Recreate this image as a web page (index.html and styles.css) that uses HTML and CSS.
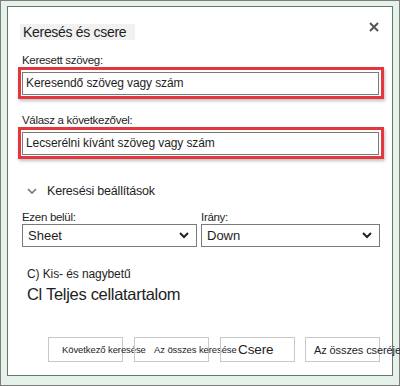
FILE: index.html
```html
<!DOCTYPE html>
<html lang="hu">
<head>
<meta charset="utf-8">
<title>Keresés és csere</title>
<link rel="stylesheet" href="styles.css">
</head>
<body>
<div class="frame">
  <div class="dialog">
    <div class="head">
      <span class="title">Keresés és csere</span>
      <svg class="close" width="10" height="10" viewBox="0 0 10 10"><path d="M1 1 L9 9 M9 1 L1 9" stroke="#555" stroke-width="2" fill="none"/></svg>
    </div>
    <div class="lbl lbl-first">Keresett szöveg:</div>
    <div class="hl"><div class="field">Keresendő szöveg vagy szám</div></div>
    <div class="lbl lbl-second">Válasz a következővel:</div>
    <div class="hl"><div class="field">Lecserélni kívánt szöveg vagy szám</div></div>
    <div class="opts">
      <svg class="chev" width="10" height="7" viewBox="0 0 10 7"><path d="M1 1 L5 5 L9 1" stroke="#777" stroke-width="1.6" fill="none"/></svg>
      <span>Keresési beállítások</span>
    </div>
    <div class="selrow">
      <div class="selcol selcol-a">
        <div class="sl">Ezen belül:</div>
        <div class="sel"><span>Sheet</span><svg width="10" height="7" viewBox="0 0 10 7"><path d="M1 1 L5 5 L9 1" stroke="#222" stroke-width="2" fill="none"/></svg></div>
      </div>
      <div class="selcol selcol-b">
        <div class="sl">Irány:</div>
        <div class="sel"><span>Down</span><svg width="10" height="7" viewBox="0 0 10 7"><path d="M1 1 L5 5 L9 1" stroke="#222" stroke-width="2" fill="none"/></svg></div>
      </div>
    </div>
    <div class="case">C) Kis- és nagybetű</div>
    <div class="whole">Cl Teljes cellatartalom</div>
    <div class="btns">
      <div class="btn b1">Következő keresése</div>
      <div class="btn b2">Az összes keresése</div>
      <div class="btn b3">Csere</div>
      <div class="btn b4">Az összes cseréje</div>
    </div>
  </div>
</div>
</body>
</html>
```

FILE: styles.css
```css
* { box-sizing: border-box; }
html, body { margin: 0; padding: 0; background: #fff; }
body { font-family: "Liberation Sans", Arial, sans-serif; color: #1e1e1e; }

.frame {
  width: 400px;
  height: 386px;
  border: 1px solid #7d7d7d;
  background: #e5f1e9;
  padding: 5px 6px 9px 6px;
}
.dialog {
  height: 100%;
  border: 1px solid #5f7a69;
  background: #fff;
  display: flex;
  flex-direction: column;
}
.head {
  display: flex;
  justify-content: space-between;
  align-items: flex-start;
  margin-top: 17px;
  padding-left: 12px;
  padding-right: 13px;
}
.title {
  background: #f1f1f1;
  font-size: 14px;
  line-height: 16px;
  height: 16px;
  letter-spacing: -0.3px;
  padding: 0 9px 0 3px;
}
.close { margin-top: -2px; }

.lbl {
  font-size: 11.5px;
  line-height: 13px;
  padding-left: 14px;
  letter-spacing: -0.3px;
}
.lbl-first { margin-top: 14px; }
.lbl-second { margin-top: 15px; }

.hl {
  margin: 0 8px 0 10px;
  border: 3px solid #e2383d;
  padding: 2px 2px 1px 1px;
  box-shadow: 1px 2px 3px rgba(0,0,0,0.25);
}
.field {
  border: 1px solid #7a7a7a;
  height: 23px;
  font-size: 12px;
  line-height: 21px;
  padding-left: 3px;
  letter-spacing: -0.1px;
  white-space: nowrap;
}

.opts {
  display: flex;
  align-items: center;
  margin-top: 23px;
  padding-left: 19px;
  height: 18px;
  font-size: 12.5px;
  letter-spacing: -0.2px;
}
.chev { margin-right: 10px; }

.selrow {
  display: flex;
  margin-top: 10px;
  padding-left: 14px;
  gap: 4px;
}
.selcol-a { width: 175px; }
.selcol-b { width: 179px; }
.sl {
  font-size: 11.5px;
  line-height: 14px;
  letter-spacing: -0.3px;
}
.sel {
  display: flex;
  align-items: center;
  justify-content: space-between;
  height: 23px;
  border: 1px solid #7a7a7a;
  padding: 0 7px 0 5px;
  font-size: 13px;
}

.case {
  margin-top: 20px;
  padding-left: 19px;
  font-size: 12px;
  line-height: 14px;
  letter-spacing: -0.1px;
}
.whole {
  margin-top: 3px;
  padding-left: 19px;
  font-size: 16.5px;
  line-height: 20px;
  letter-spacing: -0.3px;
}

.btns {
  display: flex;
  margin-top: 33px;
  padding-left: 40px;
  gap: 11px;
}
.btn {
  width: 75px;
  height: 25px;
  border: 1px solid #c8c8c8;
  white-space: nowrap;
  display: flex;
  align-items: center;
  font-size: 9.5px;
  letter-spacing: -0.1px;
}
.b1 { padding-left: 13px; }
.b2 { padding-left: 19px; }
.b3 { padding-left: 17px; font-size: 13.5px; width: 75px; }
.b4 { padding-left: 8px; font-size: 11px; margin-left: -1px; }
```
